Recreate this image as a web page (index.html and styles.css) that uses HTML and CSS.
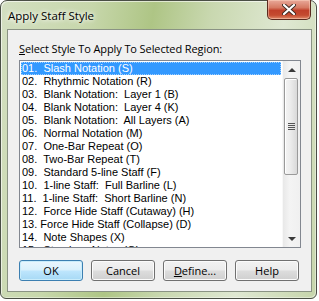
FILE: index.html
```html
<!DOCTYPE html>
<html lang="en">
<head>
    <meta charset="UTF-8">
    <title>Apply Staff Style</title>
    <link rel="stylesheet" href="styles.css">
</head>
<body>
    <div class="window">
        <div class="title-bar">
            <span class="title">Apply Staff Style</span>
            <button class="close-btn" aria-label="Close">
                <svg width="14" height="11" viewBox="0 0 14 11">
                    <path d="M2 1 L12 10 M12 1 L2 10" stroke="#3d2a22" stroke-width="4" stroke-linecap="round"/>
                    <path d="M2 1 L12 10 M12 1 L2 10" stroke="#ffffff" stroke-width="2.2" stroke-linecap="round"/>
                </svg>
            </button>
        </div>

        <div class="client">
            <div class="label"><u>S</u>elect Style To Apply To Selected Region:</div>

            <div class="listbox">
                <ul class="items">
                    <li class="selected">01.  Slash Notation (S)</li>
                    <li>02.  Rhythmic Notation (R)</li>
                    <li>03.  Blank Notation:  Layer 1 (B)</li>
                    <li>04.  Blank Notation:  Layer 4 (K)</li>
                    <li>05.  Blank Notation:  All Layers (A)</li>
                    <li>06.  Normal Notation (M)</li>
                    <li>07.  One-Bar Repeat (O)</li>
                    <li>08.  Two-Bar Repeat (T)</li>
                    <li>09.  Standard 5-line Staff (F)</li>
                    <li>10.  1-line Staff:  Full Barline (L)</li>
                    <li>11.  1-line Staff:  Short Barline (N)</li>
                    <li>12.  Force Hide Staff (Cutaway) (H)</li>
                    <li>13. Force Hide Staff (Collapse) (D)</li>
                    <li>14.  Note Shapes (X)</li>
                    <li>15.  Stemless Notes (Q)</li>
                </ul>
                <div class="scrollbar">
                    <div class="arrow arrow-up"></div>
                    <div class="track">
                        <div class="thumb"><span class="grip"></span></div>
                    </div>
                    <div class="arrow arrow-down"></div>
                </div>
            </div>

            <div class="buttons">
                <button class="btn default">OK</button>
                <button class="btn">Cancel</button>
                <button class="btn"><u>D</u>efine...</button>
                <button class="btn">Help</button>
            </div>
        </div>
    </div>
</body>
</html>
```

FILE: styles.css
```css
/* page */
body {
    margin: 0;
    padding: 0;
    background: #ffffff;
    font-family: "Open Sans", "Noto Sans", Arial, sans-serif;
    color: #000;
}

/* window frame */
.window {
    width: 317px;
    height: 299px;
    box-sizing: border-box;
    border: 1px solid #4a4f45;
    border-radius: 7px 7px 6px 6px;
    background: linear-gradient(100deg, #d3dfc1 0%, #c7d7ab 25%, #aec585 42%, #c9d8b0 58%, #dfe8d2 78%, #c6d5ab 100%);
    box-shadow: inset 1px 1px 0 rgba(255, 255, 255, 0.6), inset -1px -1px 0 rgba(255, 255, 255, 0.4);
    padding: 0 4px 6px 6px;
    display: flex;
    flex-direction: column;
}

.title-bar {
    height: 28px;
    display: flex;
    justify-content: space-between;
    align-items: flex-start;
}

.title {
    font-size: 11.5px;
    margin: 7px 0 0 1px;
    text-shadow: 0 0 6px #fff, 0 0 4px #fff;
}

.close-btn {
    width: 44px;
    height: 20px;
    margin: -1px 1px 0 0;
    padding: 0;
    border: 1px solid #5a2a1f;
    border-top: none;
    border-radius: 0 0 5px 5px;
    background: linear-gradient(180deg, #e9a99a 0%, #d67a63 40%, #c0402a 55%, #c44b30 80%, #e08a6a 100%);
    box-shadow: inset 0 0 0 1px rgba(255, 220, 200, 0.45);
    display: flex;
    align-items: center;
    justify-content: center;
}

/* client area */
.client {
    flex: 1;
    background: #f0f0f0;
    border: 1px solid #8a9384;
    padding: 12px 10px 0 11px;
    display: flex;
    flex-direction: column;
}

.label {
    font-size: 11px;
    letter-spacing: -0.1px;
    line-height: 14px;
    height: 17px;
    margin-bottom: 1px;
}

/* list box */
.listbox {
    height: 188px;
    box-sizing: border-box;
    border: 1px solid #828790;
    background: #fff;
    display: flex;
    overflow: hidden;
}

.items {
    list-style: none;
    margin: 0;
    padding: 1px 1px 0 1px;
    flex: 1;
    overflow: hidden;
}

.items li {
    font-family: "Liberation Sans", Arial, sans-serif;
    font-size: 11px;
    line-height: 13px;
    height: 13px;
    padding-left: 1px;
    white-space: pre;
}

.items li.selected {
    background: #3399ff;
    color: #fff;
    outline: 1px dotted #9fcfff;
    outline-offset: -1px;
}

/* scrollbar */
.scrollbar {
    width: 17px;
    background: linear-gradient(90deg, #e8e8e8, #f4f4f4 40%, #f0f0f0);
    border-left: 1px solid #f8f8f8;
    display: flex;
    flex-direction: column;
}

.arrow {
    height: 17px;
    display: flex;
    align-items: center;
    justify-content: center;
}

.arrow::before {
    content: "";
    border-left: 4px solid transparent;
    border-right: 4px solid transparent;
}

.arrow-up::before {
    border-bottom: 4px solid #3a3a3a;
}

.arrow-down::before {
    border-top: 4px solid #3a3a3a;
}

.track {
    flex: 1;
    padding: 0 0 0 1px;
}

.thumb {
    width: 14px;
    height: 97px;
    box-sizing: border-box;
    border: 1px solid #9a9a9a;
    border-radius: 2px;
    background: linear-gradient(90deg, #f4f4f4 0%, #ececec 45%, #d9d9d9 100%);
    box-shadow: inset 1px 1px 0 #fff;
    display: flex;
    align-items: center;
    justify-content: center;
}

.grip {
    width: 7px;
    height: 7px;
    background: repeating-linear-gradient(180deg, #555 0 1px, transparent 1px 2px);
}

/* buttons */
.buttons {
    display: flex;
    gap: 8px;
    margin-top: 12px;
}

.btn {
    width: 64px;
    height: 21px;
    padding: 0;
    font-family: inherit;
    font-size: 11px;
    color: #000;
    border: 1px solid #707070;
    border-radius: 3px;
    background: linear-gradient(180deg, #f2f2f2 0%, #ebebeb 48%, #dddddd 52%, #cfcfcf 100%);
    box-shadow: inset 0 0 0 1px #fbfbfb;
}

.btn.default {
    border-color: #3c7fb1;
    background: linear-gradient(180deg, #eaf6fd 0%, #d9f0fc 48%, #bee6fd 52%, #a7d9f5 100%);
    box-shadow: inset 0 0 0 1px #c9ecfb;
}
```
